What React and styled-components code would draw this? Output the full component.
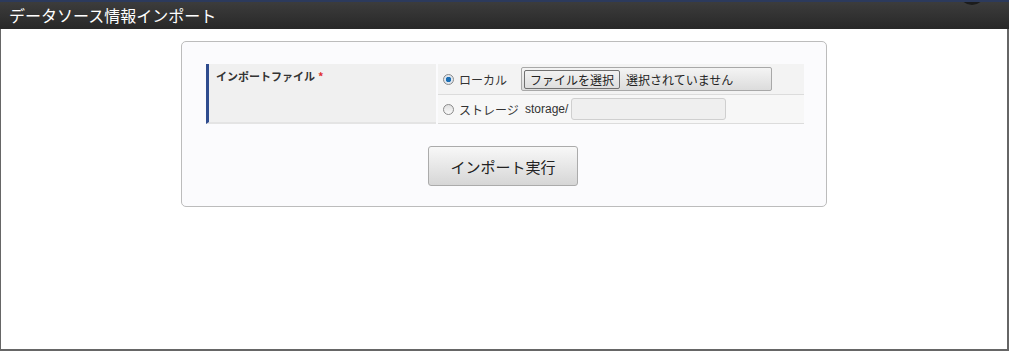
import React from 'react'
import styled, { createGlobalStyle } from 'styled-components'

const Global = createGlobalStyle`
  html, body {
    margin: 0;
    padding: 0;
    background: #fff;
  }
  body {
    font-family: 'Liberation Sans', 'Noto Sans CJK JP', sans-serif;
    color: #333;
  }
`

const Window = styled.div`
  width: 1009px;
  height: 351px;
  box-sizing: border-box;
  display: flex;
  flex-direction: column;
  overflow: hidden;
`

const TitleBar = styled.div`
  position: relative;
  overflow: hidden;
  height: 29px;
  box-sizing: border-box;
  border-top: 2px solid #2c3a5c;
  background: linear-gradient(#3c3c3c, #282828);
  color: #fff;
  font-size: 16px;
  line-height: 26px;
  padding-left: 9px;
  font-family: 'Noto Sans CJK JP', sans-serif;
`

const Knob = styled.span`
  position: absolute;
  right: 23px;
  top: -27px;
  width: 28px;
  height: 30px;
  border-radius: 50%;
  background: #1c1c1c;
`

const Body = styled.div`
  flex: 1;
  border-left: 1px solid #666;
  border-right: 2px solid #666;
  border-bottom: 2px solid #666;
  padding-top: 12px;
  display: flex;
  justify-content: center;
`

const Panel = styled.div`
  width: 646px;
  height: 166px;
  box-sizing: border-box;
  border: 1px solid #bcbcbc;
  border-radius: 5px;
  background: #fbfbfd;
  padding: 22px 22px 0 23px;
  display: flex;
  flex-direction: column;
  align-items: center;
`

const Table = styled.div`
  align-self: stretch;
  display: grid;
  grid-template-columns: 231px 1fr;
  column-gap: 2px;
  height: 60px;
`

const HeadCell = styled.div`
  background: #f0f0f0;
  border-left: 3px solid #2f4c8e;
  margin-left: 1px;
  border-bottom: 2px solid #e4e4e4;
  padding: 4px 0 0 7px;
  font-size: 11px;
  font-weight: bold;
  color: #333;
  font-family: 'Noto Sans CJK JP', sans-serif;
`

const Req = styled.span`
  color: #e03030;
  margin-left: 3px;
`

const Rows = styled.div`
  display: flex;
  flex-direction: column;
`

const Row = styled.div`
  height: ${p => p.h}px;
  box-sizing: border-box;
  background: ${p => p.bg};
  border-bottom: 1px solid #dcdcdc;
  display: flex;
  align-items: center;
  padding-left: 5px;
  font-size: 12px;
`

const Radio = styled.span`
  flex-shrink: 0;
  width: 11px;
  height: 11px;
  border-radius: 50%;
  box-sizing: border-box;
  border: 1px solid #8a8a8a;
  background: ${p =>
    p.checked
      ? 'radial-gradient(circle, #1c6fb4 0, #1c6fb4 2.5px, #dfe6ee 3px)'
      : 'linear-gradient(#e0e0e0, #fafafa)'};
`

const Label = styled.span`
  flex-shrink: 0;
  white-space: nowrap;
  margin-left: 5px;
  width: 62px;
  font-size: 12px;
  color: #333;
  font-family: 'Noto Sans CJK JP', sans-serif;
`

const FileBox = styled.div`
  width: 251px;
  height: 24px;
  box-sizing: border-box;
  border: 1px solid #a8a8a8;
  border-radius: 2px;
  background: linear-gradient(#f4f4f4, #dcdcdc);
  display: flex;
  align-items: center;
  padding-left: 2px;
  font-family: 'Noto Sans CJK JP', sans-serif;
  font-size: 12px;
  color: #222;
  white-space: nowrap;
`

const FileBtn = styled.span`
  height: 19px;
  line-height: 17px;
  box-sizing: border-box;
  border: 1px solid #707070;
  border-radius: 2px;
  background: linear-gradient(#f2f2f2, #dedede);
  padding: 0 5px;
  margin-right: 6px;
`

const Prefix = styled.span`
  font-size: 12px;
  color: #333;
  margin-left: 4px;
  margin-right: 3px;
`

const TextBox = styled.div`
  width: 155px;
  height: 22px;
  box-sizing: border-box;
  border: 1px solid #cfcfcf;
  border-radius: 3px;
  background: #efefef;
`

const Submit = styled.button`
  margin-top: 22px;
  margin-right: 3px;
  width: 150px;
  height: 40px;
  border: 1px solid #ababab;
  border-radius: 3px;
  background: linear-gradient(#f8f8f8, #d6d6d6);
  font-size: 15px;
  color: #222;
  font-family: 'Noto Sans CJK JP', sans-serif;
`

export default function App() {
  return (
    <Window>
      <Global />
      <TitleBar>
        データソース情報インポート
        <Knob />
      </TitleBar>
      <Body>
        <Panel>
          <Table>
            <HeadCell>
              インポートファイル<Req>*</Req>
            </HeadCell>
            <Rows>
              <Row h={31} bg="#f3f3f3">
                <Radio checked />
                <Label>ローカル</Label>
                <FileBox>
                  <FileBtn>ファイルを選択</FileBtn>
                  選択されていません
                </FileBox>
              </Row>
              <Row h={29} bg="#f7f7f7">
                <Radio />
                <Label>ストレージ</Label>
                <Prefix>storage/</Prefix>
                <TextBox />
              </Row>
            </Rows>
          </Table>
          <Submit>インポート実行</Submit>
        </Panel>
      </Body>
    </Window>
  )
}
